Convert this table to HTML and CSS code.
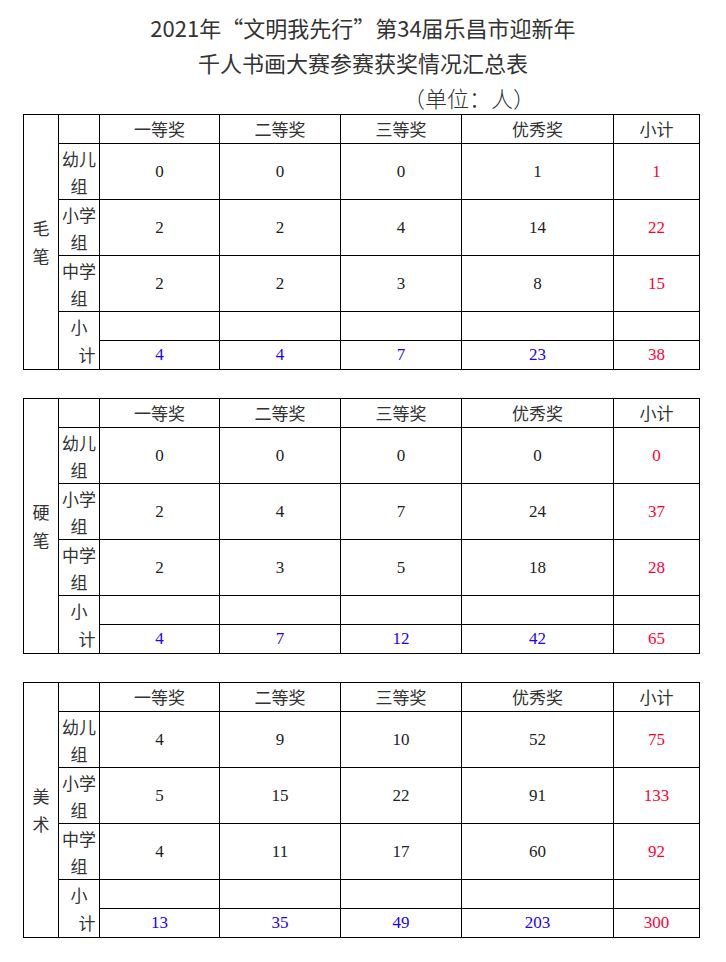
FILE: index.html
```html
<!DOCTYPE html>
<html lang="zh-CN">
<head>
<meta charset="utf-8">
<title>千人书画大赛参赛获奖情况汇总表</title>
<link rel="stylesheet" href="styles.css">
</head>
<body>
<div class="page">
  <div class="title">
    <div>2021年“文明我先行”第34届乐昌市迎新年</div>
    <div>千人书画大赛参赛获奖情况汇总表</div>
  </div>
  <div class="unit">（单位：人）</div>

  <table class="sheet">
    <colgroup><col class="c1"><col class="c2"><col class="c3"><col class="c4"><col class="c5"><col class="c6"><col class="c7"></colgroup>
    <tr class="hrow"><td class="cat" rowspan="6">毛<br>笔</td><td></td><th>一等奖</th><th>二等奖</th><th>三等奖</th><th>优秀奖</th><th>小计</th></tr>
    <tr class="drow"><td class="lab">幼儿<br>组</td><td class="n">0</td><td class="n">0</td><td class="n">0</td><td class="n">1</td><td class="n red">1</td></tr>
    <tr class="drow"><td class="lab">小学<br>组</td><td class="n">2</td><td class="n">2</td><td class="n">4</td><td class="n">14</td><td class="n red">22</td></tr>
    <tr class="drow"><td class="lab">中学<br>组</td><td class="n">2</td><td class="n">2</td><td class="n">3</td><td class="n">8</td><td class="n red">15</td></tr>
    <tr class="srow"><td class="lab sub" rowspan="2"><span class="s1">小</span><span class="s2">计</span></td><td></td><td></td><td></td><td></td><td></td></tr>
    <tr class="srow"><td class="n blue">4</td><td class="n blue">4</td><td class="n blue">7</td><td class="n blue">23</td><td class="n red">38</td></tr>
  </table>

  <table class="sheet">
    <colgroup><col class="c1"><col class="c2"><col class="c3"><col class="c4"><col class="c5"><col class="c6"><col class="c7"></colgroup>
    <tr class="hrow"><td class="cat" rowspan="6">硬<br>笔</td><td></td><th>一等奖</th><th>二等奖</th><th>三等奖</th><th>优秀奖</th><th>小计</th></tr>
    <tr class="drow"><td class="lab">幼儿<br>组</td><td class="n">0</td><td class="n">0</td><td class="n">0</td><td class="n">0</td><td class="n red">0</td></tr>
    <tr class="drow"><td class="lab">小学<br>组</td><td class="n">2</td><td class="n">4</td><td class="n">7</td><td class="n">24</td><td class="n red">37</td></tr>
    <tr class="drow"><td class="lab">中学<br>组</td><td class="n">2</td><td class="n">3</td><td class="n">5</td><td class="n">18</td><td class="n red">28</td></tr>
    <tr class="srow"><td class="lab sub" rowspan="2"><span class="s1">小</span><span class="s2">计</span></td><td></td><td></td><td></td><td></td><td></td></tr>
    <tr class="srow"><td class="n blue">4</td><td class="n blue">7</td><td class="n blue">12</td><td class="n blue">42</td><td class="n red">65</td></tr>
  </table>

  <table class="sheet">
    <colgroup><col class="c1"><col class="c2"><col class="c3"><col class="c4"><col class="c5"><col class="c6"><col class="c7"></colgroup>
    <tr class="hrow"><td class="cat" rowspan="6">美<br>术</td><td></td><th>一等奖</th><th>二等奖</th><th>三等奖</th><th>优秀奖</th><th>小计</th></tr>
    <tr class="drow"><td class="lab">幼儿<br>组</td><td class="n">4</td><td class="n">9</td><td class="n">10</td><td class="n">52</td><td class="n red">75</td></tr>
    <tr class="drow"><td class="lab">小学<br>组</td><td class="n">5</td><td class="n">15</td><td class="n">22</td><td class="n">91</td><td class="n red">133</td></tr>
    <tr class="drow"><td class="lab">中学<br>组</td><td class="n">4</td><td class="n">11</td><td class="n">17</td><td class="n">60</td><td class="n red">92</td></tr>
    <tr class="srow"><td class="lab sub" rowspan="2"><span class="s1">小</span><span class="s2">计</span></td><td></td><td></td><td></td><td></td><td></td></tr>
    <tr class="srow"><td class="n blue">13</td><td class="n blue">35</td><td class="n blue">49</td><td class="n blue">203</td><td class="n red">300</td></tr>
  </table>
</div>
</body>
</html>
```

FILE: styles.css
```css
html, body {
  margin: 0;
  padding: 0;
  background: #ffffff;
}

.page {
  width: 726px;
  color: #333333;
  font-family: "Noto Sans CJK SC", "Noto Sans", sans-serif;
}

.title {
  padding-top: 10px;
  font-size: 22px;
  line-height: 35px;
  text-align: center;
  color: #333333;
}

.unit {
  padding-left: 403px;
  font-size: 22px;
  line-height: 34px;
  font-weight: 300;
  letter-spacing: 0;
  color: #333333;
}

.sheet {
  margin: 0 0 28px 23px;
  width: 677px;
  table-layout: fixed;
  border-collapse: collapse;
  border: 1px solid #000000;
}

.c1 { width: 35px; }
.c2 { width: 41px; }
.c3 { width: 120px; }
.c4 { width: 121px; }
.c5 { width: 121px; }
.c6 { width: 152px; }
.c7 { width: 86px; }

.sheet td,
.sheet th {
  border: 1px solid #000000;
  padding: 0;
  text-align: center;
  vertical-align: middle;
  font-weight: 400;
  font-size: 17px;
  color: #333333;
}

.hrow { height: 29px; }
.drow { height: 56px; }
.srow { height: 29px; }

.sheet th {
  line-height: 28px;
}

.cat {
  line-height: 28px;
}

.lab {
  line-height: 27px;
}

.lab.sub {
  line-height: 28px;
}

.s1, .s2 {
  display: block;
}

.s2 {
  padding-left: 16px;
}

.sheet td.n {
  font-family: "Liberation Serif", "DejaVu Serif", serif;
  font-size: 17px;
  line-height: 20px;
  color: #222222;
}

.sheet td.red { color: #ff0033; }
.sheet td.blue { color: #2200ff; }
```
